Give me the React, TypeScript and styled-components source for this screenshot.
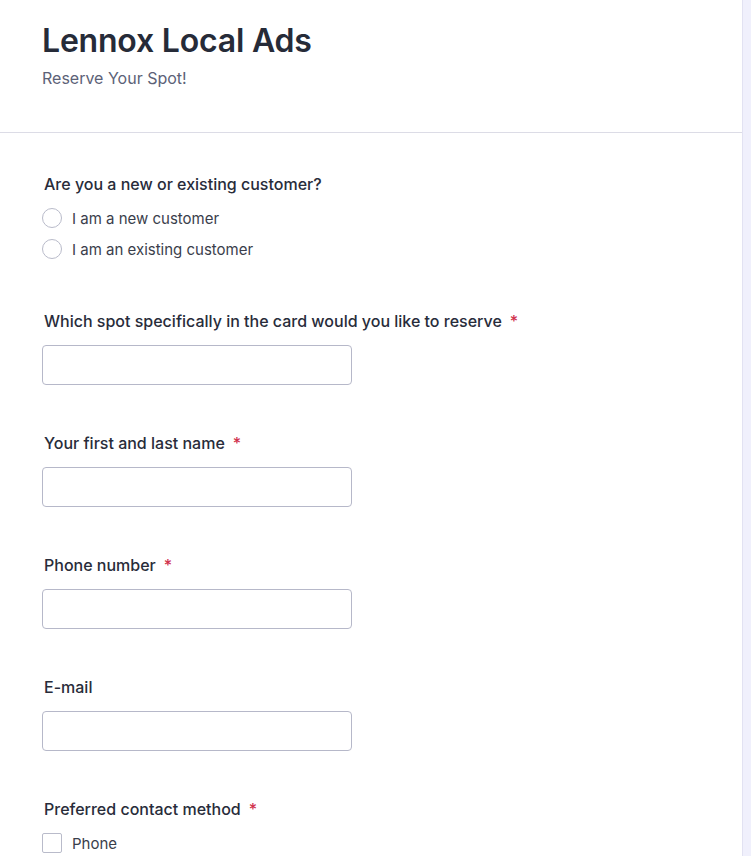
import React from "react";
import styled, { createGlobalStyle } from "styled-components";

const GlobalStyle = createGlobalStyle`
  html, body {
    margin: 0;
    padding: 0;
    background: #ffffff;
  }
  body {
    font-family: Inter, "Noto Sans", Arial, sans-serif;
    -webkit-font-smoothing: antialiased;
  }
  * {
    box-sizing: border-box;
  }
`;

const Page = styled.div`
  display: flex;
  min-height: 856px;
`;

const Card = styled.main`
  flex: 1;
  background: #ffffff;
`;

const SideRail = styled.aside`
  width: 9px;
  background: #f0f0fc;
  border-left: 1px solid #e2e2f2;
`;

const Header = styled.header`
  padding: 22px 42px 42px;
  border-bottom: 1px solid #dcdce6;
`;

const Title = styled.h1`
  margin: 0;
  font-size: 32px;
  line-height: 38px;
  font-weight: 600;
  color: #262b38;
  letter-spacing: -0.2px;
`;

const Subtitle = styled.p`
  margin: 6px 0 0;
  font-size: 16px;
  line-height: 24px;
  color: #5c6277;
`;

const Form = styled.form`
  display: flex;
  flex-direction: column;
  padding: 40px 42px 0;
`;

const Field = styled.div<{ $after?: number }>`
  display: flex;
  flex-direction: column;
  margin-bottom: ${(p) => p.$after ?? 47}px;
`;

const Label = styled.label`
  display: block;
  padding-left: 2px;
  font-size: 16px;
  line-height: 22px;
  font-weight: 500;
  color: #282c3a;
  margin-bottom: 13px;
`;

const Required = styled.span`
  color: #d0304c;
  margin-left: 8px;
`;

const TextInput = styled.input`
  width: 310px;
  height: 40px;
  border: 1px solid #b6b8c9;
  border-radius: 4px;
  padding: 0 12px;
  font-family: inherit;
  font-size: 15px;
  outline: none;
  background: #ffffff;
`;

const Options = styled.div`
  display: flex;
  flex-direction: column;
  gap: 11px;
`;

const Option = styled.label`
  display: flex;
  align-items: center;
  gap: 10px;
  height: 20px;
  font-size: 15px;
  color: #3a3e4b;
  cursor: pointer;
`;

const Mark = styled.span<{ $round?: boolean }>`
  width: 20px;
  height: 20px;
  flex: none;
  border: 1px solid #b9bbca;
  border-radius: ${(p) => (p.$round ? "50%" : "2px")};
  background: #ffffff;
`;

const HiddenInput = styled.input`
  display: none;
`;

const fields = [
  { label: "Which spot specifically in the card would you like to reserve", required: true },
  { label: "Your first and last name", required: true },
  { label: "Phone number", required: true },
  { label: "E-mail", required: false },
];

export default function App() {
  return (
    <>
      <GlobalStyle />
      <Page>
        <Card>
          <Header>
            <Title>Lennox Local Ads</Title>
            <Subtitle>Reserve Your Spot!</Subtitle>
          </Header>
          <Form>
            <Field $after={51}>
              <Label>Are you a new or existing customer?</Label>
              <Options>
                <Option>
                  <HiddenInput type="radio" name="customer" />
                  <Mark $round />I am a new customer
                </Option>
                <Option>
                  <HiddenInput type="radio" name="customer" />
                  <Mark $round />I am an existing customer
                </Option>
              </Options>
            </Field>
            {fields.map((f) => (
              <Field key={f.label}>
                <Label>
                  {f.label}
                  {f.required && <Required>*</Required>}
                </Label>
                <TextInput type="text" />
              </Field>
            ))}
            <Field>
              <Label>
                Preferred contact method<Required>*</Required>
              </Label>
              <Options>
                <Option>
                  <HiddenInput type="checkbox" />
                  <Mark />
                  Phone
                </Option>
              </Options>
            </Field>
          </Form>
        </Card>
        <SideRail />
      </Page>
    </>
  );
}
